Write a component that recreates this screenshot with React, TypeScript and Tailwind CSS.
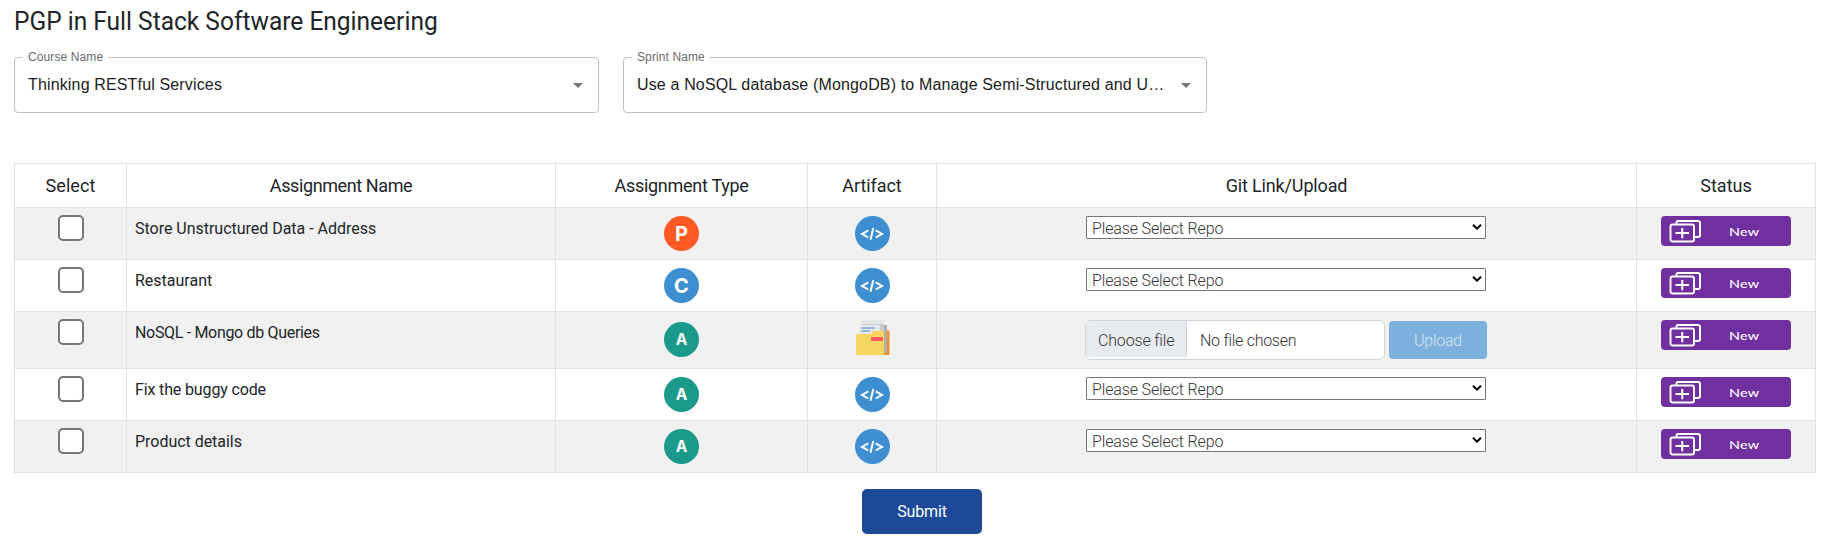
import React from "react";

type Row = { name: string; tracking: string; type: "P" | "C" | "A"; upload?: boolean; h: string };

const rows: Row[] = [
  { name: "Store Unstructured Data - Address", tracking: "tracking-[-0.02px]", type: "P", h: "h-[52px]" },
  { name: "Restaurant", tracking: "tracking-[0px]", type: "C", h: "h-[52px]" },
  { name: "NoSQL - Mongo db Queries", tracking: "tracking-[-0.32px]", type: "A", upload: true, h: "h-[57px]" },
  { name: "Fix the buggy code", tracking: "tracking-[-0.14px]", type: "A", h: "h-[52px]" },
  { name: "Product details", tracking: "tracking-[-0.03px]", type: "A", h: "h-[52px]" },
];

const headers: { label: string; tracking: string }[] = [
  { label: "Select", tracking: "tracking-[0.05px]" },
  { label: "Assignment Name", tracking: "tracking-[-0.4px]" },
  { label: "Assignment Type", tracking: "tracking-[-0.28px]" },
  { label: "Artifact", tracking: "tracking-[-0.08px]" },
  { label: "Git Link/Upload", tracking: "tracking-[-0.15px]" },
  { label: "Status", tracking: "tracking-[0px]" },
];

const typeColor = { P: "bg-[#ff5a26]", C: "bg-[#3d8fd1]", A: "bg-[#1b998b]" };
const typeSize = { P: "text-[20px]", C: "text-[20px]", A: "text-[15.5px]" };

function Field({ label, value, width }: { label: string; value: string; width: string }) {
  return (
    <fieldset className={`h-[61px] min-w-0 rounded-[4px] border border-[#c1c1c1] pl-[8px] font-['Liberation_Sans',sans-serif] ${width}`}>
      <legend className="h-[11px] px-[5px] text-[12px] leading-[11px] tracking-[0.11px] text-[#6b6b6b]">{label}</legend>
      <div className="flex h-[42px] items-center pl-[5px] pr-[15px]">
        <span className="whitespace-nowrap text-[16px] leading-[23px] tracking-[0.15px] text-[#212121]">{value}</span>
        <svg className="ml-auto mt-[3px] h-[5px] w-[10px] shrink-0" viewBox="0 0 10 5">
          <path d="M0 0h10L5 5z" fill="#757575" />
        </svg>
      </div>
    </fieldset>
  );
}

function CodeIcon() {
  return (
    <svg className="ml-[47px] block h-[35px] w-[35px]" viewBox="0 0 35 35">
      <circle cx="17.5" cy="17.5" r="17.5" fill="#3d8fd1" />
      <path d="M13.3 14.3 7 17.9l6.300 3.600M20.700 14.300l6.300 3.600-6.300 3.600M18.300 12l-2.800 11.700" fill="none" stroke="#fff" strokeWidth="2" />
    </svg>
  );
}

function FolderIcon() {
  return (
    <svg className="ml-[47px] block h-[35px] w-[35px]" viewBox="0 0 35 35">
      <path d="M26 10.500h7.500q1 0 1 1V34q0 1-1 1H26z" fill="#ec9120" />
      <path d="M24 5h8v28h-3V12h-5z" fill="#afafaf" />
      <path d="M7 0h22v20H7z" fill="#e4e5e6" />
      <path d="M7 4h22v7H7z" fill="#cbcccd" />
      <path d="M4 5h21v12H4z" fill="#e6e8ea" />
      <path d="M6.500 8h13.500M6.500 11h8.500" stroke="#7ba7d7" strokeWidth="1.400" />
      <path d="M1 15.200q0-1.200 1.200-1.200H17v-1.700q0-1.500 1.500-1.500H29V35H2.200Q1 35 1 33.800z" fill="#f7d560" />
      <rect x="16" y="17" width="12" height="4" rx=".8" fill="#ff5a5f" />
    </svg>
  );
}

function StatusBadge() {
  return (
    <div className="mx-auto flex h-[30px] w-[130px] items-center rounded-[4px] bg-[#7030a0] pl-[8px]">
      <svg className="h-[24px] w-[33px]" viewBox="0 0 33 24" fill="none" stroke="#fff" strokeWidth="1.900">
        <rect x="1.500" y="5.500" width="23.500" height="17" rx="2" />
        <path d="M7.500 5V3.500q0-1.500 1.500-1.500h20q2 0 2 2V16q0 2-2 2h-3.500M13.250 9v10.200M6.500 14h13.500" strokeWidth="2" />
      </svg>
      <span className="ml-[27px] origin-left scale-x-[1.25] pt-px font-[Lato,sans-serif] text-[11.500px] font-medium leading-none tracking-[0.2px] text-white">New</span>
    </div>
  );
}

function RepoSelect() {
  return (
    <div className="ml-[149px] flex h-[23px] w-[400px] items-center justify-between rounded-[1px] border border-[#767676] bg-white pl-[5px] pr-[3px] text-[#333]">
      <span className="pt-[2px] font-light leading-[21px] tracking-[-0.14px]">Please Select Repo</span>
      <svg className="mb-px h-[6px] w-[10px]" viewBox="0 0 10 6">
        <path d="M1 .8 5 4.600 9 .8" fill="none" stroke="#000" strokeWidth="2" />
      </svg>
    </div>
  );
}

function Upload() {
  return (
    <div className="ml-[148px] flex w-[402px] text-[16px] font-light">
      <div className="flex h-[40px] w-[300px] overflow-hidden rounded-[6px] border border-[#ced4da] bg-white">
        <span className="flex h-[36px] w-[101px] shrink-0 items-center border-r border-[#ced4da] bg-[#e9ecef] pl-[12px] pt-[3px] tracking-[-0.17px] text-[#333]">Choose file</span>
        <span className="flex h-[38px] items-center pl-[13px] pt-px tracking-[-0.28px] text-[#333]">No file chosen</span>
      </div>
      <button className="ml-[4px] mt-px flex h-[38px] w-[98px] items-center justify-center rounded-[4px] bg-[#7db0dc] pt-[2px] tracking-[-0.25px] text-[#d5e5f4]">Upload</button>
    </div>
  );
}

const cell = "border-b border-r border-[#dee2e6]";
const grid = "grid grid-cols-[112px_429px_252px_129px_700px_179px]";

export default function App() {
  return (
    <main className="h-[550px] w-[1836px] overflow-hidden bg-white font-[Roboto,sans-serif] text-[16px] text-[#212529]">
      <h1 className="ml-[14px] h-[52px] pt-[6px] text-[26px] leading-[30px]">
        <span className="inline-block origin-left scale-x-[0.943]">PGP in Full Stack Software Engineering</span>
      </h1>
      <div className="ml-[14px] flex gap-[24px]">
        <Field label="Course Name" value="Thinking RESTful Services" width="w-[585px]" />
        <Field label="Sprint Name" value="Use a NoSQL database (MongoDB) to Manage Semi-Structured and U…" width="w-[584px]" />
      </div>
      <section className="ml-[14px] mt-[50px] w-[1802px] border-l border-t border-[#dee2e6]">
        <div className={grid}>
          {headers.map((h) => (
            <div key={h.label} className={`${cell} flex h-[44px] items-center justify-center text-[18px]`}>
              <span className={h.tracking}>{h.label}</span>
            </div>
          ))}
        </div>
        {rows.map((r, i) => (
          <div key={r.name} className={`${grid} ${r.h} ${i % 2 === 0 ? "bg-[#f1f1f1]" : "bg-white"}`}>
            <div className={`${cell} pt-[6.5px]`}>
              <div className="mx-auto h-[26px] w-[26px] rounded-[5px] border-2 border-[#767676] bg-white" />
            </div>
            <div className={`${cell} pl-[8px] pt-[9px] leading-[24px]`}>
              <span className={r.tracking}>{r.name}</span>
            </div>
            <div className={`${cell} ${r.upload ? "pt-[10px]" : "pt-[8px]"}`}>
              <div className={`mx-auto flex h-[35px] w-[35px] items-center justify-center rounded-full pt-px font-[Inter,sans-serif] font-bold text-white ${typeColor[r.type]} ${typeSize[r.type]}`}>{r.type}</div>
            </div>
            <div className={`${cell} pt-[8px]`}>{r.upload ? <FolderIcon /> : <CodeIcon />}</div>
            <div className={`${cell} pt-[8px]`}>{r.upload ? <Upload /> : <RepoSelect />}</div>
            <div className={`${cell} pt-[8px]`}>
              <StatusBadge />
            </div>
          </div>
        ))}
      </section>
      <button className="ml-[862px] mt-[16px] flex h-[45px] w-[120px] items-center justify-center rounded-[5px] bg-[#1c4a99] text-[16px] text-white">
        <span className="tracking-[-0.15px]">Submit</span>
      </button>
    </main>
  );
}
